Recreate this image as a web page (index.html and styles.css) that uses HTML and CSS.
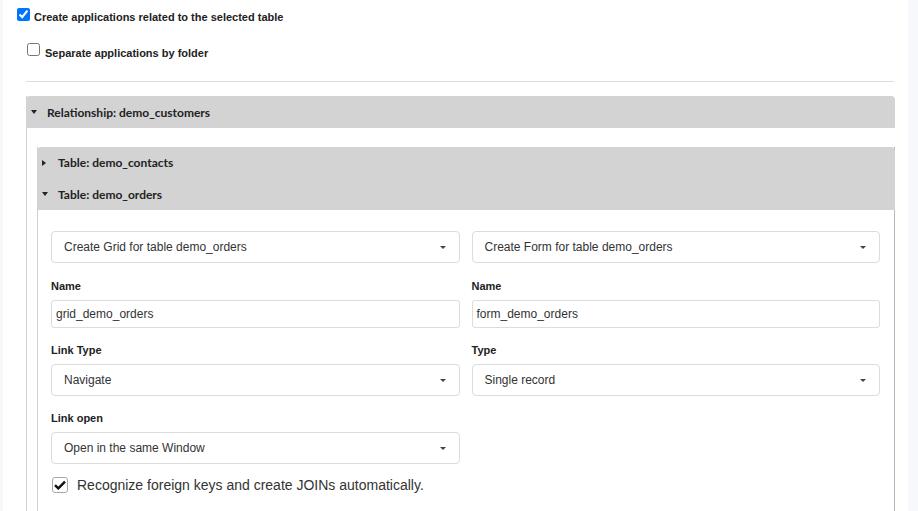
FILE: index.html
```html
<!DOCTYPE html>
<html lang="en">
<head>
    <meta charset="UTF-8">
    <title>Create applications</title>
    <link rel="stylesheet" href="styles.css">
</head>
<body>
<div class="page">

    <label class="opt opt-main">
        <input type="checkbox" checked>
        <span>Create applications related to the selected table</span>
    </label>

    <label class="opt opt-sub">
        <input type="checkbox">
        <span>Separate applications by folder</span>
    </label>

    <div class="divider"></div>

    <div class="panel">
        <div class="panel-head">
            <span class="tri tri-down"></span>Relationship: demo_customers
        </div>
        <div class="panel-body">

            <div class="subpanel">
                <div class="subpanel-head">
                    <div class="head-row"><span class="tri tri-right"></span>Table: demo_contacts</div>
                    <div class="head-row"><span class="tri tri-down"></span>Table: demo_orders</div>
                </div>

                <div class="subpanel-body">
                    <div class="fields">
                        <div class="select">Create Grid for table demo_orders<span class="caret"></span></div>
                        <div class="select">Create Form for table demo_orders<span class="caret"></span></div>

                        <div class="field">
                            <div class="field-label">Name</div>
                            <div class="input">grid_demo_orders</div>
                        </div>
                        <div class="field">
                            <div class="field-label">Name</div>
                            <div class="input">form_demo_orders</div>
                        </div>

                        <div class="field field-gap">
                            <div class="field-label">Link Type</div>
                            <div class="select">Navigate<span class="caret"></span></div>
                        </div>
                        <div class="field field-gap">
                            <div class="field-label">Type</div>
                            <div class="select">Single record<span class="caret"></span></div>
                        </div>

                        <div class="field field-gap">
                            <div class="field-label">Link open</div>
                            <div class="select">Open in the same Window<span class="caret"></span></div>
                        </div>
                    </div>

                    <div class="check-row">
                        <span class="check-box">
                            <svg width="12" height="10" viewBox="0 0 12 10"><path d="M1 5.2 L4.3 8.4 L11 1.6" fill="none" stroke="#111" stroke-width="2.4"/></svg>
                        </span>
                        <span>Recognize foreign keys and create JOINs automatically.</span>
                    </div>
                </div>
            </div>

        </div>
    </div>

</div>
</body>
</html>
```

FILE: styles.css
```css
html, body {
    height: 100%;
}

body {
    margin: 0;
    background-color: #f7f8fb;
    font-family: "Liberation Sans", Arial, sans-serif;
    color: #333;
    overflow: hidden;
}

.page {
    margin-left: 3px;
    width: 905px;
    min-height: 100%;
    background-color: #fff;
    padding-top: 7px;
    box-sizing: border-box;
}

/* top options */
.opt {
    display: flex;
    align-items: flex-start;
    font-size: 11px;
    font-weight: bold;
    color: #222;
    line-height: 13px;
}

.opt input {
    width: 13px;
    height: 13px;
    margin: 0 4px 0 0;
    accent-color: #0075ff;
}

.opt-main {
    padding-left: 14px;
    margin-top: 1px;
}

.opt-main span {
    margin-top: 3px;
}

.opt-sub {
    padding-left: 24px;
    margin-top: 19px;
}

.opt-sub input {
    margin-right: 5px;
}

.opt-sub span {
    margin-top: 4px;
}

.divider {
    height: 1px;
    background-color: #dcdcdc;
    margin: 21px 14px 0 23px;
}

/* panels */
.panel {
    margin: 14px 13px 0 23px;
    border-left: 1px solid #cfcfcf;
}

.panel-head,
.subpanel-head {
    background-color: #d3d3d3;
    font-family: Lato, "Liberation Sans", sans-serif;
    font-weight: bold;
    font-size: 12px;
    color: #222;
}

.panel-head {
    height: 32px;
    display: flex;
    align-items: center;
    padding-left: 5px;
    border-radius: 4px 4px 0 0;
    margin-left: -1px;
}

.panel-body {
    padding: 19px 0 0 10px;
}

.subpanel {
    border-left: 1px solid #cfcfcf;
    border-right: 1px solid #b9b9b9;
    height: 380px;
}

.subpanel-head {
    border-radius: 4px 4px 0 0;
    margin-left: -1px;
    margin-right: -1px;
}

.head-row {
    height: 31px;
    display: flex;
    align-items: center;
    padding-left: 5px;
}

.head-row + .head-row {
    height: 32px;
}

.tri {
    display: inline-block;
    width: 0;
    height: 0;
    margin-right: 10px;
}

.tri-down {
    border-left: 3px solid transparent;
    border-right: 3px solid transparent;
    border-top: 4px solid #222;
}

.tri-right {
    border-top: 3px solid transparent;
    border-bottom: 3px solid transparent;
    border-left: 4px solid #222;
    margin-right: 12px;
}

.subpanel-body {
    padding: 21px 14px 0 13px;
}

.fields {
    display: grid;
    grid-template-columns: 1fr 1fr;
    column-gap: 12px;
}

.select {
    position: relative;
    height: 32px;
    border: 1px solid #dcdcdc;
    border-radius: 4px;
    box-sizing: border-box;
    padding-left: 12px;
    display: flex;
    align-items: center;
    font-size: 12px;
    color: #333;
}

.caret {
    position: absolute;
    right: 13px;
    top: 14px;
    border-left: 3px solid transparent;
    border-right: 3px solid transparent;
    border-top: 3px solid #444;
}

.field-label {
    margin: 16px 0 7px;
    line-height: 14px;
    font-size: 11px;
    font-weight: bold;
    color: #222;
}

.field-gap .field-label {
    margin-top: 15px;
}

.input {
    height: 28px;
    border: 1px solid #dcdcdc;
    border-radius: 3px;
    box-sizing: border-box;
    padding-left: 4px;
    display: flex;
    align-items: center;
    font-size: 12px;
    color: #333;
}

.check-row {
    display: flex;
    align-items: center;
    margin-top: 13px;
    margin-left: 1px;
    font-size: 14px;
    color: #333;
}

.check-box {
    width: 16px;
    height: 16px;
    border: 1px solid #a8a8a8;
    border-radius: 3px;
    box-sizing: border-box;
    display: flex;
    align-items: center;
    justify-content: center;
    margin-right: 9px;
}
```
